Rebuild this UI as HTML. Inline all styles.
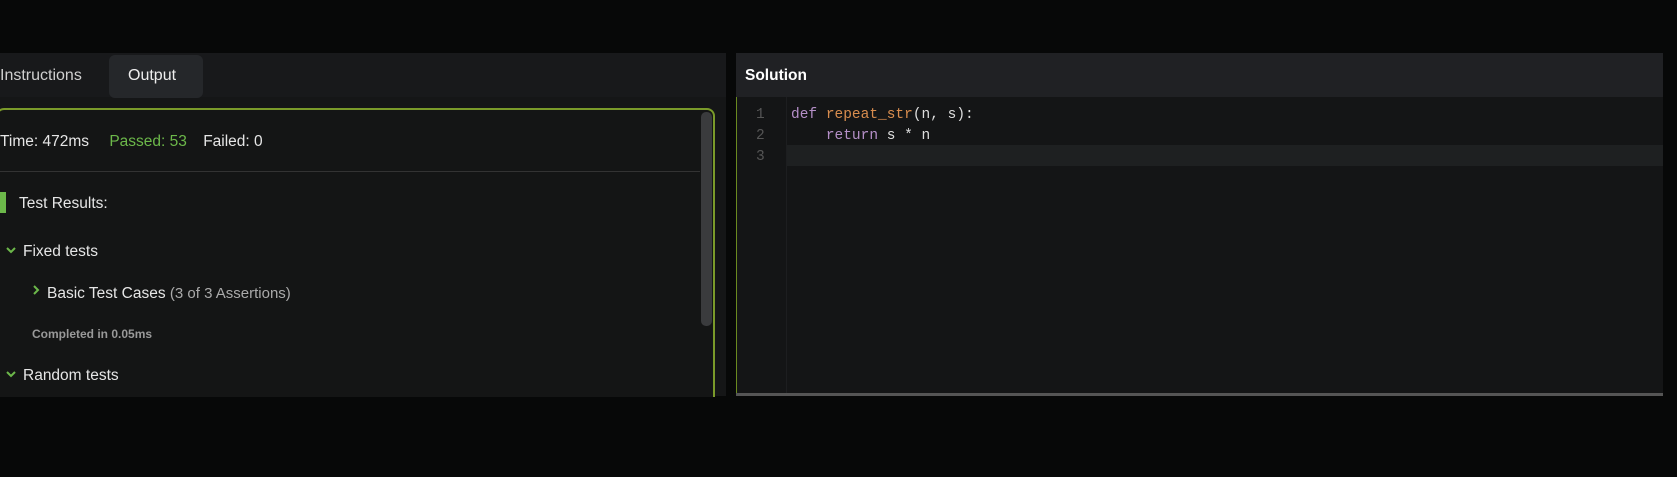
<!DOCTYPE html>
<html><head><style>
*{margin:0;padding:0;box-sizing:border-box}
body{width:1677px;height:477px;background:#070808;position:relative;overflow:hidden;font-family:"Liberation Sans",sans-serif;color:#e6e6e6}
.a{position:absolute}
.mono{font-family:"Liberation Mono",monospace;font-size:14.5px}
</style></head><body>
<div class="a" style="left:0;top:53px;width:726px;height:343px;background:#151617"></div>
<div class="a" style="left:0;top:53px;width:726px;height:44px;background:#18191b"></div>
<div class="a" style="left:0;top:67px;font-size:16px;color:#d0d0d0">Instructions</div>
<div class="a" style="left:109px;top:55px;width:94px;height:43px;background:#25272a;border-radius:6px"></div>
<div class="a" style="left:128px;top:67px;font-size:16px;color:#eee">Output</div>
<div class="a" style="left:-4px;top:108px;width:719px;height:300px;border:2px solid #7a9a2a;border-radius:8px;background:#141515"></div>
<div class="a" style="left:701px;top:112px;width:11px;height:214px;background:#3a3b3d;border-radius:5px"></div>
<div class="a" style="left:0;top:133px;font-size:15.5px">Time: 472ms <span style="color:#6cb84a;margin-left:16px">Passed: 53</span> <span style="margin-left:12px">Failed: 0</span></div>
<div class="a" style="left:0;top:171px;width:700px;height:1px;background:#333"></div>
<div class="a" style="left:0;top:192px;width:6px;height:21px;background:#6cb84a"></div>
<div class="a" style="left:19px;top:195px;font-size:15.5px">Test Results:</div>
<svg class="a" style="left:6px;top:246px" width="10" height="8"><path d="M1 2l4 4 4-4" stroke="#6cb84a" stroke-width="2" fill="none"/></svg>
<div class="a" style="left:23px;top:243px;font-size:15.5px">Fixed tests</div>
<svg class="a" style="left:32px;top:285px" width="8" height="10"><path d="M2 1l4 4-4 4" stroke="#6cb84a" stroke-width="2" fill="none"/></svg>
<div class="a" style="left:47px;top:285px;font-size:15.5px">Basic Test Cases <span style="color:#aaa;font-size:15px">(3 of 3 Assertions)</span></div>
<div class="a" style="left:32px;top:327px;font-size:12px;font-weight:bold;color:#999">Completed in 0.05ms</div>
<svg class="a" style="left:6px;top:370px" width="10" height="8"><path d="M1 2l4 4 4-4" stroke="#6cb84a" stroke-width="2" fill="none"/></svg>
<div class="a" style="left:23px;top:367px;font-size:15.5px">Random tests</div>
<div class="a" style="left:0;top:397px;width:1677px;height:80px;background:#070808"></div>

<div class="a" style="left:736px;top:53px;width:927px;height:44px;background:#202124"></div>
<div class="a" style="left:745px;top:67px;font-size:15.5px;font-weight:bold;color:#fff">Solution</div>
<div class="a" style="left:736px;top:97px;width:927px;height:297px;background:#141516;border-left:1px solid #6a8a20"></div>
<div class="a" style="left:786px;top:97px;width:1px;height:297px;background:#1d1e20"></div>
<div class="a" style="left:787px;top:145px;width:876px;height:21px;background:#1e2021"></div>
<div class="a" style="left:736px;top:393px;width:927px;height:3px;background:#555"></div>
<div class="a mono" style="left:756px;top:105px;line-height:21px;color:#555">1<br>2<br>3</div>
<div class="a mono" style="left:791px;top:105px;line-height:21px;color:#ddd;white-space:pre"><span style="color:#b58fc8">def</span> <span style="color:#d98d4e">repeat_str</span>(n, s):
    <span style="color:#b58fc8">return</span> s * n</div>
</body></html>
